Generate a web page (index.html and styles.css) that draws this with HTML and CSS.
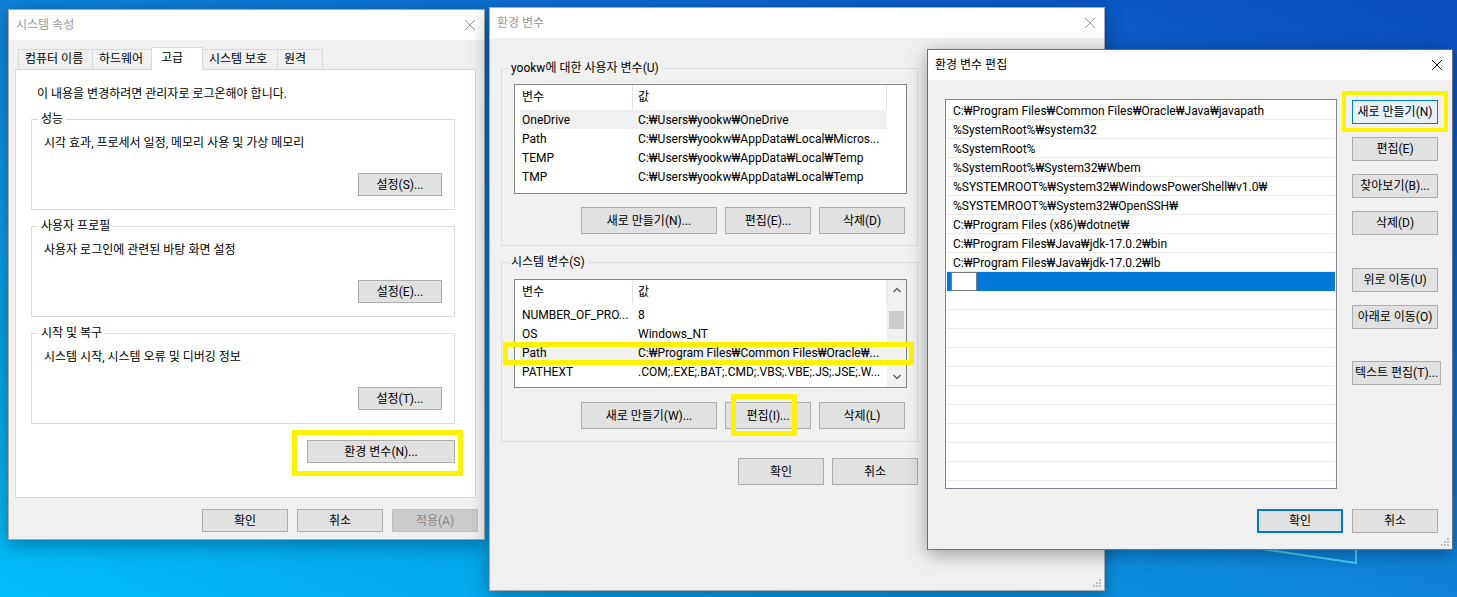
FILE: index.html
```html
<!DOCTYPE html>
<html lang="ko">
<head>
<meta charset="UTF-8">
<title>환경 변수 편집</title>
<link rel="stylesheet" href="styles.css">
</head>
<body>

<svg class="beam" width="1457" height="597" viewBox="0 0 1457 597">
<path d="M1248 547 L1356 563 L1356 540" fill="none" stroke="#48cdf3" stroke-width="2"/>
</svg>

<!-- 시스템 속성 -->
<div class="win sysprop">
<div class="titlebar">
<span class="title">시스템 속성</span>
<span class="close"><svg width="10" height="10" viewBox="0 0 10 10"><path d="M0 0L10 10M10 0L0 10" stroke="#999" stroke-width="1"/></svg></span>
</div>
<div class="body">
<ul class="tabs">
<li>컴퓨터 이름</li>
<li>하드웨어</li>
<li class="on">고급</li>
<li>시스템 보호</li>
<li>원격</li>
</ul>
<div class="panel">
<p class="info">이 내용을 변경하려면 관리자로 로그온해야 합니다.</p>

<fieldset class="group">
<legend>성능</legend>
<p class="desc">시각 효과, 프로세서 일정, 메모리 사용 및 가상 메모리</p>
<div class="actions"><button class="btn w84">설정(S)...</button></div>
</fieldset>

<fieldset class="group">
<legend>사용자 프로필</legend>
<p class="desc">사용자 로그인에 관련된 바탕 화면 설정</p>
<div class="actions"><button class="btn w84">설정(E)...</button></div>
</fieldset>

<fieldset class="group">
<legend>시작 및 복구</legend>
<p class="desc">시스템 시작, 시스템 오류 및 디버깅 정보</p>
<div class="actions"><button class="btn w84">설정(T)...</button></div>
</fieldset>

<div class="env-row">
<span class="mark-wrap">
<button class="btn w148">환경 변수(N)...</button>
<span class="mark mark-env"></span>
</span>
</div>
</div>
<div class="dlg-buttons">
<button class="btn">확인</button>
<button class="btn">취소</button>
<button class="btn" disabled>적용(A)</button>
</div>
</div>
</div>

<!-- 환경 변수 -->
<div class="win envvars">
<div class="titlebar">
<span class="title">환경 변수</span>
<span class="close"><svg width="10" height="10" viewBox="0 0 10 10"><path d="M0 0L10 10M10 0L0 10" stroke="#999" stroke-width="1"/></svg></span>
</div>
<div class="body">
<fieldset class="group user">
<legend>yookw에 대한 사용자 변수(U)</legend>
<div class="lv">
<div class="lv-main">
<div class="lv-head"><span class="h1">변수</span><span class="h2">값</span></div>
<div class="lv-row hot"><span class="c1">OneDrive</span><span class="c2">C:₩Users₩yookw₩OneDrive</span></div>
<div class="lv-row"><span class="c1">Path</span><span class="c2">C:₩Users₩yookw₩AppData₩Local₩Micros...</span></div>
<div class="lv-row"><span class="c1">TEMP</span><span class="c2">C:₩Users₩yookw₩AppData₩Local₩Temp</span></div>
<div class="lv-row"><span class="c1">TMP</span><span class="c2">C:₩Users₩yookw₩AppData₩Local₩Temp</span></div>
</div>
</div>
<div class="lv-buttons">
<button class="btn w136">새로 만들기(N)...</button>
<button class="btn">편집(E)...</button>
<button class="btn">삭제(D)</button>
</div>
</fieldset>

<fieldset class="group sys">
<legend>시스템 변수(S)</legend>
<div class="lv">
<div class="lv-main">
<div class="lv-head"><span class="h1">변수</span><span class="h2">값</span></div>
<div class="lv-row"><span class="c1">NUMBER_OF_PRO...</span><span class="c2">8</span></div>
<div class="lv-row"><span class="c1">OS</span><span class="c2">Windows_NT</span></div>
<div class="lv-row hot"><span class="c1">Path</span><span class="c2">C:₩Program Files₩Common Files₩Oracle₩...</span></div>
<div class="lv-row"><span class="c1">PATHEXT</span><span class="c2">.COM;.EXE;.BAT;.CMD;.VBS;.VBE;.JS;.JSE;.W...</span></div>
</div>
<div class="vscroll">
<span class="arr"><svg width="8" height="6" viewBox="0 0 8 6"><path d="M0.5 5L4 1.5L7.5 5" fill="none" stroke="#606060" stroke-width="1.5"/></svg></span>
<span class="thumb"></span>
<span class="fill"></span>
<span class="arr"><svg width="8" height="6" viewBox="0 0 8 6"><path d="M0.5 1L4 4.5L7.5 1" fill="none" stroke="#606060" stroke-width="1.5"/></svg></span>
</div>
</div>
<div class="lv-buttons">
<button class="btn w136">새로 만들기(W)...</button>
<span class="mark-wrap">
<button class="btn">편집(I)...</button>
<span class="mark mark-edit"></span>
</span>
<button class="btn">삭제(L)</button>
</div>
</fieldset>

<div class="dlg-buttons">
<button class="btn">확인</button>
<button class="btn">취소</button>
</div>
</div>
<span class="mark mark-path"></span>
<svg class="grip" width="9" height="9" viewBox="0 0 9 9" fill="#bdbdbd"><rect x="6" y="0" width="2" height="2"/><rect x="3" y="3" width="2" height="2"/><rect x="6" y="3" width="2" height="2"/><rect x="0" y="6" width="2" height="2"/><rect x="3" y="6" width="2" height="2"/><rect x="6" y="6" width="2" height="2"/></svg>
</div>

<!-- 환경 변수 편집 -->
<div class="win pathedit">
<div class="titlebar">
<span class="title">환경 변수 편집</span>
<span class="close"><svg width="10" height="10" viewBox="0 0 10 10"><path d="M0 0L10 10M10 0L0 10" stroke="#000" stroke-width="1"/></svg></span>
</div>
<div class="body">
<div class="pe-top">
<div class="pl">
<div class="pl-row">C:₩Program Files₩Common Files₩Oracle₩Java₩javapath</div>
<div class="pl-row">%SystemRoot%₩system32</div>
<div class="pl-row">%SystemRoot%</div>
<div class="pl-row">%SystemRoot%₩System32₩Wbem</div>
<div class="pl-row">%SYSTEMROOT%₩System32₩WindowsPowerShell₩v1.0₩</div>
<div class="pl-row">%SYSTEMROOT%₩System32₩OpenSSH₩</div>
<div class="pl-row">C:₩Program Files (x86)₩dotnet₩</div>
<div class="pl-row">C:₩Program Files₩Java₩jdk-17.0.2₩bin</div>
<div class="pl-row">C:₩Program Files₩Java₩jdk-17.0.2₩lb</div>
<div class="pl-row sel"><span class="pl-edit"></span></div>
<div class="pl-row"></div>
<div class="pl-row"></div>
<div class="pl-row"></div>
<div class="pl-row"></div>
<div class="pl-row"></div>
<div class="pl-row"></div>
<div class="pl-row"></div>
<div class="pl-row"></div>
<div class="pl-row"></div>
<div class="pl-row"></div>
<div class="pl-row"></div>
</div>
<div class="pe-side">
<span class="mark-wrap">
<button class="btn focus">새로 만들기(N)</button>
<span class="mark mark-new"></span>
</span>
<button class="btn">편집(E)</button>
<button class="btn">찾아보기(B)...</button>
<button class="btn">삭제(D)</button>
<button class="btn sp1">위로 이동(U)</button>
<button class="btn">아래로 이동(O)</button>
<button class="btn sp2 w89">텍스트 편집(T)...</button>
</div>
</div>
<div class="dlg-buttons">
<button class="btn default">확인</button>
<button class="btn">취소</button>
</div>
</div>
<svg class="grip" width="9" height="9" viewBox="0 0 9 9" fill="#bdbdbd"><rect x="6" y="0" width="2" height="2"/><rect x="3" y="3" width="2" height="2"/><rect x="6" y="3" width="2" height="2"/><rect x="0" y="6" width="2" height="2"/><rect x="3" y="6" width="2" height="2"/><rect x="6" y="6" width="2" height="2"/></svg>
</div>

</body>
</html>
```

FILE: styles.css
```css
*{
box-sizing:border-box;
}

body{
margin:0;
width:1457px;
height:597px;
overflow:hidden;
position:relative;
font-family:Roboto,"Noto Sans CJK KR",sans-serif;
font-size:12px;
color:#000;
background:linear-gradient(to top right,#00bdf8 0%,#0e82d8 50%,#0b4cc0 100%);
}

.beam{
position:absolute;
left:0;
top:0;
}

/* 창 공통 */
.win{
position:absolute;
display:flex;
flex-direction:column;
background:#f0f0f0;
border:1px solid #a9a9a9;
box-shadow:0 4px 18px rgba(0,0,0,0.35);
}

.sysprop{left:8px;top:9px;width:477px;height:531px;}
.envvars{left:489px;top:7px;width:616px;height:584px;}
.pathedit{left:927px;top:49px;width:526px;height:501px;border-color:#6f6f6f;}

.titlebar{
flex:none;
height:30px;
display:flex;
align-items:center;
padding:0 0 1px 7px;
background:#fff;
color:#999;
line-height:16px;
}

.titlebar .title{flex:1;}

.titlebar .close{
width:28px;
display:flex;
justify-content:center;
}

.pathedit .titlebar{color:#000;padding-right:1px;}

.grip{
position:absolute;
right:2px;
bottom:2px;
}

/* 버튼 */
.btn{
font:inherit;
width:86px;
height:23px;
padding:0;
background:#e1e1e1;
border:1px solid #adadad;
color:#000;
line-height:16px;
white-space:nowrap;
}

.btn:disabled{
background:#cccccc;
border-color:#bfbfbf;
color:#838383;
}

.btn.focus{background:#e5f1fb;border-color:#0078d7;}
.btn.default{border:2px solid #0078d7;}

.w84{width:84px;}
.w89{width:89px;}
.w136{width:136px;}
.w148{width:148px;}

.dlg-buttons{
display:flex;
justify-content:flex-end;
gap:9px;
}

/* 노란 표시 */
.mark-wrap{
position:relative;
display:inline-flex;
}

.mark{
position:absolute;
border:5px solid #fff200;
}

.mark-env{left:-15px;top:-10px;width:171px;height:46px;}
.mark-edit{left:6px;top:-8px;width:66px;height:42px;}
.mark-path{left:13px;top:334px;width:411px;height:23px;}
.mark-new{left:-10px;top:-9px;width:106px;height:41px;border-width:4px;}

/* 그룹 상자 */
.group{
margin:0 0 8px;
padding:8px 12px 13px;
border:1px solid #dcdcdc;
min-width:0;
}

.group legend{
padding:0 3px;
margin-left:-6px;
line-height:16px;
}

/* 시스템 속성 */
.sysprop .body{padding:7px 6px 0 6px;}

.tabs{
display:flex;
align-items:flex-end;
height:22px;
margin:0 0 0 3px;
padding:0;
list-style:none;
}

.tabs li{
height:20px;
margin-right:-1px;
padding-left:6px;
border:1px solid #d9d9d9;
border-bottom:0;
background:#f0f0f0;
line-height:19px;
white-space:nowrap;
}

.tabs li:nth-child(1){width:75px;}
.tabs li:nth-child(2){width:60px;}
.tabs li:nth-child(3){width:52px;}
.tabs li:nth-child(4){width:76px;}
.tabs li:nth-child(5){width:46px;}

.tabs li.on{
position:relative;
z-index:1;
height:23px;
margin-bottom:-1px;
padding-left:9px;
background:#fff;
line-height:21px;
}

.panel{
width:461px;
height:429px;
padding:15px 20px 0 15px;
background:#fff;
border:1px solid #d9d9d9;
}

.info{
margin:0 0 8px 6px;
line-height:18px;
}

.desc{
margin:0;
line-height:17px;
}

.actions{
display:flex;
justify-content:flex-end;
margin-top:21px;
}

.env-row{
display:flex;
justify-content:flex-end;
margin-top:16px;
}

.sysprop .dlg-buttons{margin-top:11px;}

/* 환경 변수 */
.envvars .body{padding:22px 0 0 11px;}

.envvars .group{
width:417px;
padding:8px 10px 11px 12px;
}

.envvars .group.sys{padding-top:9px;padding-bottom:12px;}

.envvars .btn{height:27px;}

.lv{
display:flex;
width:393px;
height:110px;
background:#fff;
border:1px solid #828790;
overflow:hidden;
}

.sys .lv{height:109px;}

.lv-main{width:372px;flex:none;}

.lv-head{
display:flex;
height:25px;
line-height:25px;
}

.lv-head span{border-right:1px solid #e5e5e5;}
.lv-head .h1{width:118px;padding-left:7px;}
.lv-head .h2{width:254px;padding-left:5px;}

.lv-row{
display:flex;
width:367px;
height:19px;
margin-left:5px;
line-height:21px;
white-space:nowrap;
}

.lv-row.hot{background:#f0f0f0;}
.lv-row .c1{width:112px;padding-left:2px;overflow:hidden;height:19px;}
.lv-row .c2{flex:1;padding-left:6px;overflow:hidden;height:19px;}

.vscroll{
flex:1;
display:flex;
flex-direction:column;
align-items:center;
background:#f0f0f0;
}

.vscroll .arr{
height:20px;
display:flex;
align-items:center;
justify-content:center;
}

.vscroll .thumb{
width:15px;
height:18px;
margin-top:11px;
background:#cdcdcd;
}

.vscroll .fill{flex:1;}

.lv-buttons{
display:flex;
justify-content:flex-end;
gap:8px;
margin-top:13px;
padding-right:2px;
}

.sys .lv-buttons{margin-top:14px;}

.envvars .dlg-buttons{
width:417px;
gap:8px;
margin-top:16px;
}

/* 환경 변수 편집 */
.pathedit .body{padding:19px 0 0 17px;}

.pe-top{display:flex;}

.pl{
width:392px;
height:390px;
padding-top:1px;
background:#fff;
border:1px solid #828790;
overflow:hidden;
}

.pl-row{
height:19px;
margin:0 1px;
padding-left:6px;
border-bottom:1px solid #ebebeb;
line-height:20px;
white-space:nowrap;
overflow:hidden;
}

.pl-row.sel{
padding-left:4px;
background:#0078d7;
border-bottom-color:#0078d7;
overflow:visible;
}

.pl-edit{
display:block;
width:26px;
height:19px;
background:#fff;
border:1px solid #7a7a7a;
}

.pe-side{
display:flex;
flex-direction:column;
align-items:flex-start;
margin-left:15px;
padding-top:1px;
}

.pe-side .btn{height:24px;margin-bottom:13px;}
.pe-side .sp1{margin-top:20px;}
.pe-side .sp2{margin-top:19px;}

.pathedit .dlg-buttons{
margin-top:20px;
padding-right:14px;
}

.pathedit .dlg-buttons .btn{height:24px;}
```
